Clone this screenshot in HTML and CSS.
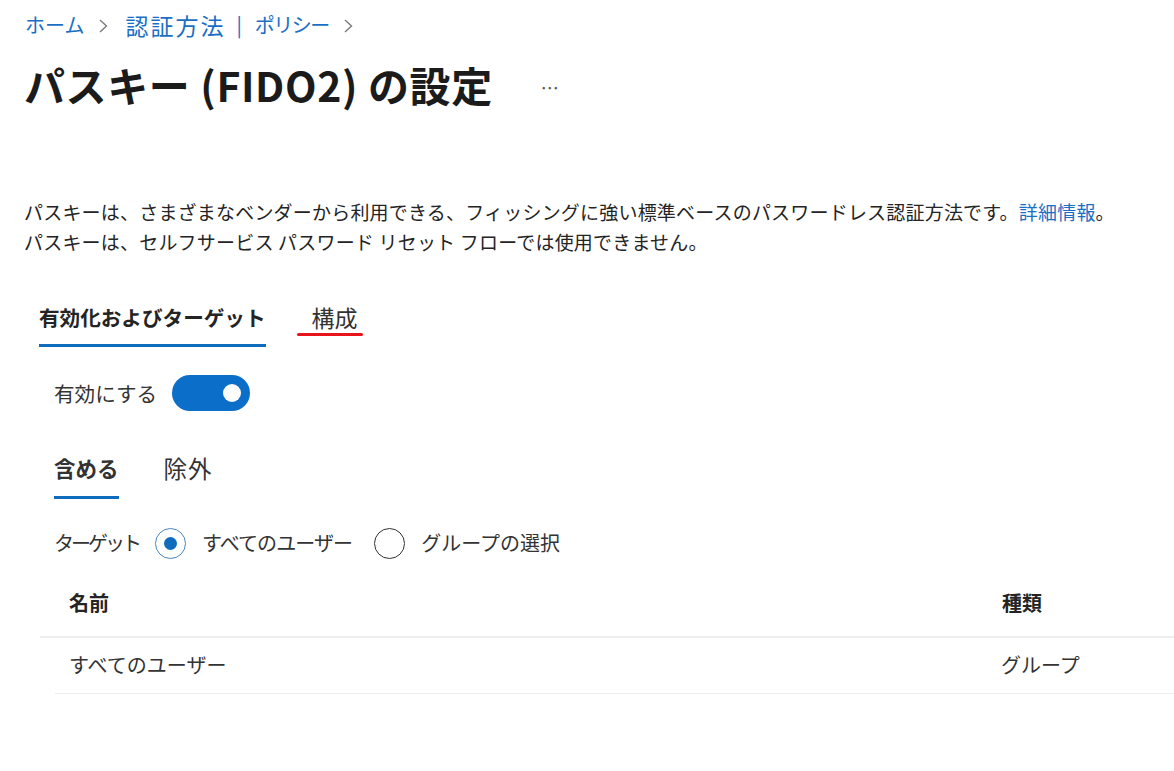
FILE: index.html
```html
<!DOCTYPE html>
<html lang="ja">
<head>
    <meta charset="UTF-8">
    <title>パスキー (FIDO2) の設定</title>
    <link rel="stylesheet" href="styles.css">
</head>
<body>
    <nav class="breadcrumb">
        <a href="#" class="crumb-home">ホーム</a>
        <svg class="chev" width="9" height="14" viewBox="0 0 9 14"><path d="M1 1l6.5 6L1 13" fill="none" stroke="#7a7a7a" stroke-width="1.4"/></svg>
        <a href="#" class="crumb-wide">認証方法</a>
        <span class="pipe">|</span>
        <a href="#" class="crumb-narrow">ポリシー</a>
        <svg class="chev" width="9" height="14" viewBox="0 0 9 14"><path d="M1 1l6.5 6L1 13" fill="none" stroke="#7a7a7a" stroke-width="1.4"/></svg>
    </nav>

    <div class="title-row">
        <h1>パスキー (FIDO2) の設定</h1>
        <span class="more">…</span>
    </div>

    <p class="desc">
        パスキーは、さまざまなベンダーから利用できる、フィッシングに強い標準ベースのパスワードレス認証方法です。<a href="#">詳細情報</a>。<br>
        パスキーは、セルフサービス パスワード リセット フローでは使用できません。
    </p>

    <div class="tabs">
        <div class="tab active">有効化およびターゲット</div>
        <div class="tab marked">構成</div>
    </div>

    <div class="enable-row">
        <span>有効にする</span>
        <span class="toggle"><span class="knob"></span></span>
    </div>

    <div class="subtabs">
        <div class="subtab active">含める</div>
        <div class="subtab wide">除外</div>
    </div>

    <div class="radio-row">
        <span class="radio-label">ターゲット</span>
        <label class="radio checked"><span class="circle"></span><span class="all-users">すべてのユーザー</span></label>
        <label class="radio"><span class="circle"></span>グループの選択</label>
    </div>

    <div class="grid">
        <div class="grid-head">
            <div class="col-name">名前</div>
            <div class="col-type">種類</div>
        </div>
        <div class="grid-row">
            <div class="col-name">すべてのユーザー</div>
            <div class="col-type">グループ</div>
        </div>
    </div>
</body>
</html>
```

FILE: styles.css
```css
body {
    margin: 0;
    padding: 0 0 0 24px;
    font-family: "Noto Sans CJK JP", "Noto Sans", sans-serif;
    color: #242424;
    background: #fff;
    overflow: hidden;
}
a {
    color: #1a6fc4;
    text-decoration: none;
}
.breadcrumb {
    padding-top: 12px;
    font-size: 20px;
    line-height: 26px;
    display: flex;
    align-items: center;
}
.breadcrumb .crumb-home {
    margin-left: 1px;
}
.breadcrumb .chev {
    margin: 2px 17px 0 15px;
}
.breadcrumb .crumb-wide {
    font-size: 23px;
    letter-spacing: 2px;
    margin-right: -2px;
}
.breadcrumb .crumb-narrow {
    letter-spacing: -1.5px;
}
.breadcrumb .pipe {
    color: #1a6fc4;
    margin: 0 13px;
}
.title-row {
    margin-top: 22px;
    display: flex;
    align-items: center;
}
h1 {
    margin: 0;
    font-size: 41px;
    line-height: 48px;
    font-weight: 700;
    color: #1b1b1b;
    letter-spacing: 0.6px;
}
.more {
    margin-left: 48px;
    margin-top: 6px;
    font-size: 18px;
    color: #555;
}
.desc {
    margin: 89px 0 0;
    font-size: 19px;
    line-height: 30px;
    letter-spacing: 0.2px;
}
.tabs {
    margin-top: 45px;
    margin-left: 15px;
    display: flex;
    gap: 31px;
}
.tab {
    font-size: 20.6px;
    line-height: 30px;
    padding-bottom: 12px;
    border-bottom: 3px solid transparent;
}
.tab.active {
    font-weight: 700;
    border-bottom-color: #0f6cbd;
}
.tab.marked {
    position: relative;
    font-size: 23px;
    padding: 0 5px 12px 15px;
    color: #333;
}
.tab.marked::after {
    content: "";
    position: absolute;
    left: 0;
    right: 0;
    top: 31px;
    height: 3px;
    border-radius: 2px;
    background: #e8141c;
}
.enable-row {
    margin-top: 28px;
    margin-left: 30px;
    display: flex;
    align-items: center;
    gap: 15px;
    font-size: 20.6px;
    line-height: 36px;
    color: #333;
}
.toggle {
    width: 78px;
    height: 36px;
    border-radius: 18px;
    background: #0b6ec9;
    display: flex;
    align-items: center;
    justify-content: flex-end;
    padding-right: 9px;
    box-sizing: border-box;
}
.knob {
    width: 18px;
    height: 18px;
    border-radius: 50%;
    background: #fff;
}
.subtabs {
    margin-top: 42px;
    margin-left: 30px;
    display: flex;
    gap: 45px;
}
.subtab {
    font-size: 21.5px;
    line-height: 30px;
    padding-bottom: 13px;
    border-bottom: 3px solid transparent;
    color: #333;
}
.subtab.active {
    font-weight: 700;
    border-bottom-color: #0f6cbd;
}
.subtab.wide {
    font-size: 23.5px;
    letter-spacing: 1px;
}
.radio-row {
    margin-top: 28px;
    margin-left: 30px;
    display: flex;
    align-items: center;
    font-size: 20px;
    line-height: 32px;
    color: #333;
}
.radio-label {
    letter-spacing: -3px;
    margin-right: 16px;
}
.radio {
    display: flex;
    align-items: center;
    margin-right: 22px;
}
.all-users {
    letter-spacing: -0.9px;
}
.circle {
    width: 31px;
    height: 31px;
    box-sizing: border-box;
    border: 1.5px solid #333;
    border-radius: 50%;
    margin-right: 16px;
    display: flex;
    align-items: center;
    justify-content: center;
}
.radio.checked .circle {
    border-color: #4a86c0;
}
.radio.checked .circle::after {
    content: "";
    width: 13px;
    height: 13px;
    border-radius: 50%;
    background: #0f6cbd;
}
.grid {
    margin-top: 12px;
    margin-left: 16px;
    font-size: 20px;
    line-height: 30px;
}
.grid-head,
.grid-row {
    display: flex;
}
.grid-head {
    font-weight: 700;
    padding: 17px 0 18px;
    border-bottom: 2px solid #eeeeee;
}
.grid-row {
    margin-left: 15px;
    padding: 12px 0 13px;
    border-bottom: 1px solid #eeeeee;
    color: #333;
}
.col-name {
    box-sizing: border-box;
    flex: none;
}
.grid-head .col-name {
    width: 962px;
    padding-left: 29px;
}
.grid-row .col-name {
    width: 946px;
    padding-left: 14px;
}
.col-type {
    flex: 1;
}
```
